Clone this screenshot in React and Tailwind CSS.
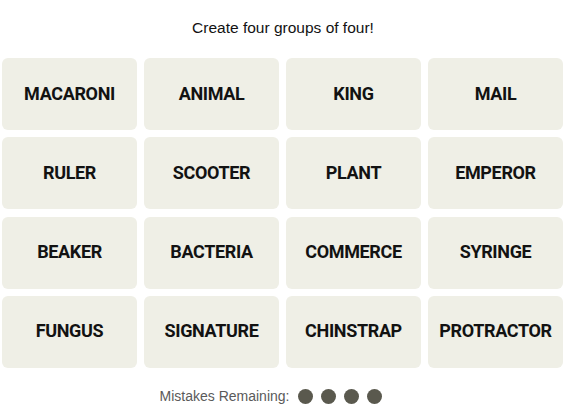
import React from "react";

const words = [
  "MACARONI", "ANIMAL", "KING", "MAIL",
  "RULER", "SCOOTER", "PLANT", "EMPEROR",
  "BEAKER", "BACTERIA", "COMMERCE", "SYRINGE",
  "FUNGUS", "SIGNATURE", "CHINSTRAP", "PROTRACTOR",
];

export default function App() {
  return (
    <div className="w-[566px] h-[410px] bg-white flex flex-col" style={{ fontFamily: '"Liberation Sans", Arial, sans-serif' }}>
      <div className="h-[58px] flex items-start justify-center pt-[16px] text-[15.5px] text-[#121212]">
        Create four groups of four!
      </div>
      <div className="grid grid-cols-4 gap-x-[7px] gap-y-[7.3px] pl-[2px] w-[563px]">
        {words.map((w) => (
          <div
            key={w}
            className="h-[72px] rounded-[6px] bg-[#efefe6] flex items-center justify-center pb-[2px] text-[18px] font-bold text-[#121212] tracking-[-0.35px] font-['Roboto',sans-serif]"
          >
            {w}
          </div>
        ))}
      </div>
      <div className="flex items-center justify-center mt-[18px] gap-[9px] pr-[24px]">
        <span className="text-[14px] text-[#5a5a5a]">Mistakes Remaining:</span>
        <div className="flex gap-[8px]">
          <span className="w-[15px] h-[15px] rounded-full bg-[#5a594e]" />
          <span className="w-[15px] h-[15px] rounded-full bg-[#5a594e]" />
          <span className="w-[15px] h-[15px] rounded-full bg-[#5a594e]" />
          <span className="w-[15px] h-[15px] rounded-full bg-[#5a594e]" />
        </div>
      </div>
    </div>
  );
}
